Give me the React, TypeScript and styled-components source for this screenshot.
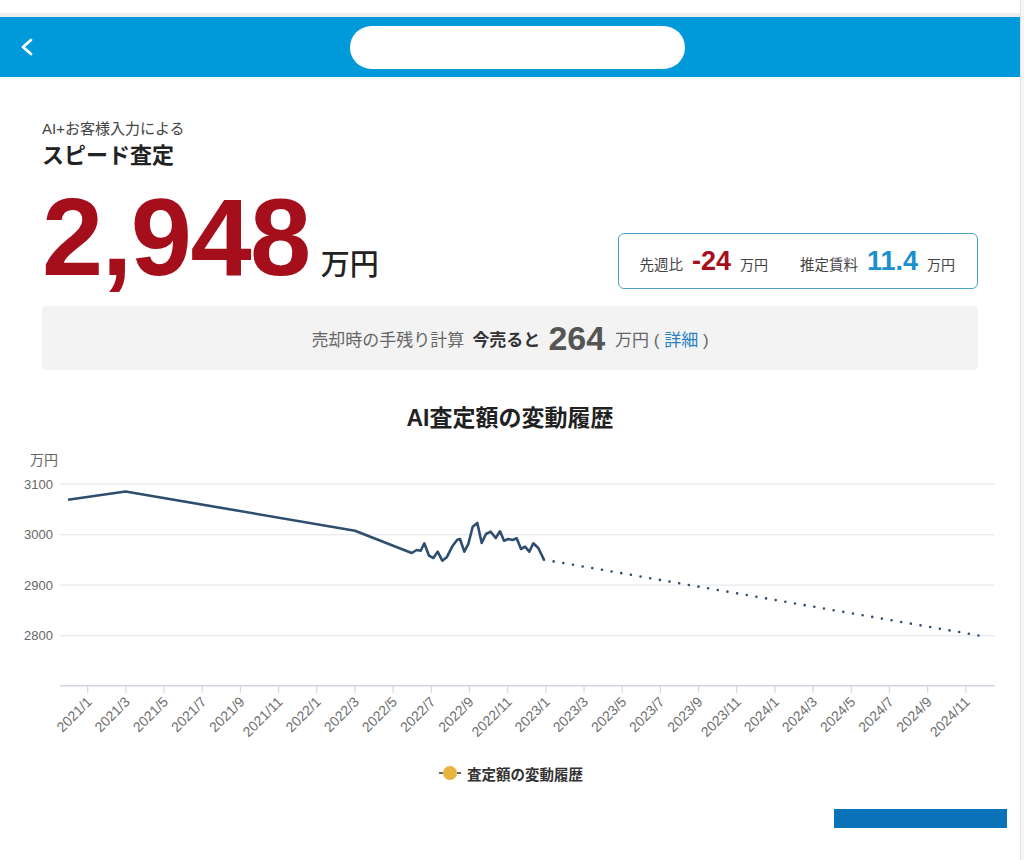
import React from "react";
import styled, { createGlobalStyle } from "styled-components";

const GlobalStyle = createGlobalStyle`
  html, body {
    margin: 0;
    padding: 0;
    background: #f6f6f6;
  }
  body {
    font-family: "Liberation Sans", "Noto Sans CJK JP", sans-serif;
    color: #222;
  }
`;

const Page = styled.div`
  width: 1021px;
  min-height: 860px;
  background: #fff;
  border-right: 1px solid #e2e2e2;
  box-sizing: border-box;
  display: flex;
  flex-direction: column;
`;

const TopStrip = styled.div`
  height: 13px;
  background: #fff;
  border-bottom: 4px solid #ececec;
`;

const Header = styled.header`
  height: 60px;
  background: #0099d9;
  display: flex;
  align-items: center;
  padding: 0 20px;
`;

const BackButton = styled.button`
  width: 14px;
  height: 18px;
  padding: 0;
  border: 0;
  background: none;
  display: flex;
  align-items: center;
  cursor: pointer;
`;

const SearchPill = styled.div`
  width: 335px;
  height: 43px;
  margin-left: 316px;
  background: #fff;
  border-radius: 22px;
`;

const Content = styled.main`
  padding: 42px 42px 0;
  display: flex;
  flex-direction: column;
`;

const Lead = styled.div`
  font-size: 15px;
  line-height: 20px;
  color: #444;
`;

const Heading = styled.h1`
  margin: 3px 0 0;
  font-size: 22px;
  line-height: 28px;
  font-weight: 700;
  color: #222;
`;

const TopRow = styled.div`
  margin-top: 12px;
  display: flex;
  justify-content: space-between;
  align-items: flex-end;
`;

const Amount = styled.div`
  display: flex;
  align-items: baseline;
  gap: 11px;
`;

const BigNumber = styled.span`
  font-size: 110px;
  line-height: 110px;
  font-weight: 700;
  letter-spacing: -1.5px;
  color: #a50f1c;
`;

const Unit = styled.span<{ $size?: number }>`
  font-size: ${(p) => p.$size ?? 14}px;
  font-weight: ${(p) => (p.$size ? 500 : 400)};
  color: ${(p) => (p.$size ? "#222" : "#444")};
`;

const StatsBox = styled.div`
  height: 56px;
  box-sizing: border-box;
  margin-bottom: 3px;
  padding: 0 22px 0 20px;
  border: 1.5px solid #4aa3c9;
  border-radius: 6px;
  display: flex;
  align-items: center;
  gap: 32px;
`;

const Stat = styled.div`
  display: flex;
  align-items: baseline;
  gap: 9px;
`;

const StatLabel = styled.span`
  font-size: 14.5px;
  color: #444;
`;

const StatValue = styled.span<{ $tone: "red" | "blue" }>`
  font-size: 27px;
  font-weight: 700;
  color: ${(p) => (p.$tone === "red" ? "#a50f1c" : "#1a90d0")};
`;

const SellBox = styled.div`
  margin-top: 14px;
  height: 64px;
  background: #f3f3f3;
  border-radius: 4px;
  display: flex;
  justify-content: center;
  align-items: center;
  gap: 8px;
  font-size: 17px;
  color: #666;
`;

const SellStrong = styled.span`
  font-weight: 700;
  color: #333;
`;

const SellNumber = styled.span`
  font-size: 34px;
  font-weight: 700;
  color: #555;
  margin-right: 2px;
`;

const DetailLink = styled.a`
  color: #2a7fc0;
  text-decoration: none;
`;

const ChartTitle = styled.h2`
  margin: 33px 0 0;
  font-size: 23px;
  line-height: 30px;
  font-weight: 700;
  text-align: center;
  color: #222;
`;

const ChartSvg = styled.svg`
  display: block;
  margin-top: 11px;
  font-family: "Liberation Sans", "Noto Sans CJK JP", sans-serif;
`;

const Legend = styled.div`
  margin-top: 14px;
  display: flex;
  justify-content: center;
  align-items: center;
  gap: 6px;
  height: 20px;
  padding-left: 2px;
`;

const LegendText = styled.span`
  font-size: 14.5px;
  font-weight: 700;
  color: #333;
`;

const BottomBar = styled.div`
  align-self: flex-end;
  margin: 26px 13px 0 0;
  width: 173px;
  height: 19px;
  background: #0a72b8;
`;

// chart helpers (page coordinates, viewBox starts at y=445)
const yOf = (v: number) => 535.7 - (v - 3000) * 0.505;
const monthX = (i: number) => 87.7 + i * 19.09;
const AXIS_Y = 686.7;

const solid: [number, number][] = [
  [68, 500.7], [125.5, 492.5], [355, 531.7], [411.7, 554], [416.7, 551],
  [420.7, 551.7], [424.3, 544.3], [429, 556.7], [433.3, 559], [437.7, 552.7],
  [442.3, 561.7], [446.7, 558.3], [452.7, 546.7], [457.3, 540.7], [460, 540],
  [464.3, 552.7], [468.3, 545], [472.7, 527.7], [477.3, 524], [481.7, 544],
  [486, 535], [490.7, 532.7], [495.7, 539], [500, 532.3], [504, 541.7],
  [508.3, 540], [512.7, 541], [516.7, 539.3], [521, 550], [525, 547.7],
  [529.3, 552.7], [533.3, 544.3], [538.3, 549], [544, 560.7],
];

const ticks = Array.from({ length: 24 }, (_, k) => {
  const i = k * 2;
  return { x: monthX(i), label: `${2021 + Math.floor(i / 12)}/${(i % 12) + 1}` };
});

function HistoryChart() {
  return (
    <ChartSvg width={1021} height={305} viewBox="0 445 1021 305">
      <text x={30} y={466} fontSize={14} fill="#666">万円</text>
      {[3100, 3000, 2900, 2800].map((v) => (
        <g key={v}>
          <line x1={60} x2={995} y1={yOf(v)} y2={yOf(v)} stroke="#e8e8ef" strokeWidth={1.2} />
          <text x={53} y={yOf(v) + 4.5} fontSize={13} fill="#666" textAnchor="end">{v}</text>
        </g>
      ))}
      <line x1={60} x2={995} y1={AXIS_Y} y2={AXIS_Y} stroke="#d4d4e4" strokeWidth={1.5} />
      {ticks.map((t) => (
        <g key={t.label}>
          <line x1={t.x} x2={t.x} y1={AXIS_Y} y2={AXIS_Y + 7} stroke="#d4d4e4" strokeWidth={1.2} />
          <text
            x={t.x + 5}
            y={AXIS_Y + 17}
            fontSize={14}
            fill="#6e6e6e"
            textAnchor="end"
            transform={`rotate(-45 ${t.x + 5} ${AXIS_Y + 17})`}
          >
            {t.label}
          </text>
        </g>
      ))}
      <polyline
        points={solid.map((p) => p.join(",")).join(" ")}
        fill="none"
        stroke="#2d4e6e"
        strokeWidth={2.6}
        strokeLinejoin="round"
      />
      <line
        x1={544}
        y1={560.7}
        x2={980}
        y2={yOf(2800)}
        stroke="#2d4e6e"
        strokeWidth={2.6}
        strokeDasharray="0 9.8"
        strokeLinecap="round"
      />
    </ChartSvg>
  );
}

export default function App() {
  return (
    <>
      <GlobalStyle />
      <Page>
        <TopStrip />
        <Header>
          <BackButton aria-label="戻る">
            <svg width="14" height="18" viewBox="0 0 14 18">
              <polyline points="11,2 3,9 11,16" fill="none" stroke="#fff" strokeWidth="2.8" strokeLinecap="round" strokeLinejoin="round" />
            </svg>
          </BackButton>
          <SearchPill />
        </Header>
        <Content>
          <Lead>AI+お客様入力による</Lead>
          <Heading>スピード査定</Heading>
          <TopRow>
            <Amount>
              <BigNumber>2,948</BigNumber>
              <Unit $size={29}>万円</Unit>
            </Amount>
            <StatsBox>
              <Stat>
                <StatLabel>先週比</StatLabel>
                <StatValue $tone="red">-24</StatValue>
                <Unit>万円</Unit>
              </Stat>
              <Stat>
                <StatLabel>推定賃料</StatLabel>
                <StatValue $tone="blue">11.4</StatValue>
                <Unit>万円</Unit>
              </Stat>
            </StatsBox>
          </TopRow>
          <SellBox>
            <span>売却時の手残り計算</span>
            <SellStrong>今売ると</SellStrong>
            <SellNumber>264</SellNumber>
            <span>
              万円 ( <DetailLink href="#">詳細</DetailLink> )
            </span>
          </SellBox>
          <ChartTitle>AI査定額の変動履歴</ChartTitle>
        </Content>
        <HistoryChart />
        <Legend>
          <svg width="22" height="16" viewBox="0 0 22 16">
            <line x1="0" x2="22" y1="8" y2="8" stroke="#666" strokeWidth="2" strokeDasharray="4 2" />
            <circle cx="11" cy="8" r="7" fill="#e8b440" />
          </svg>
          <LegendText>査定額の変動履歴</LegendText>
        </Legend>
        <BottomBar />
      </Page>
    </>
  );
}
